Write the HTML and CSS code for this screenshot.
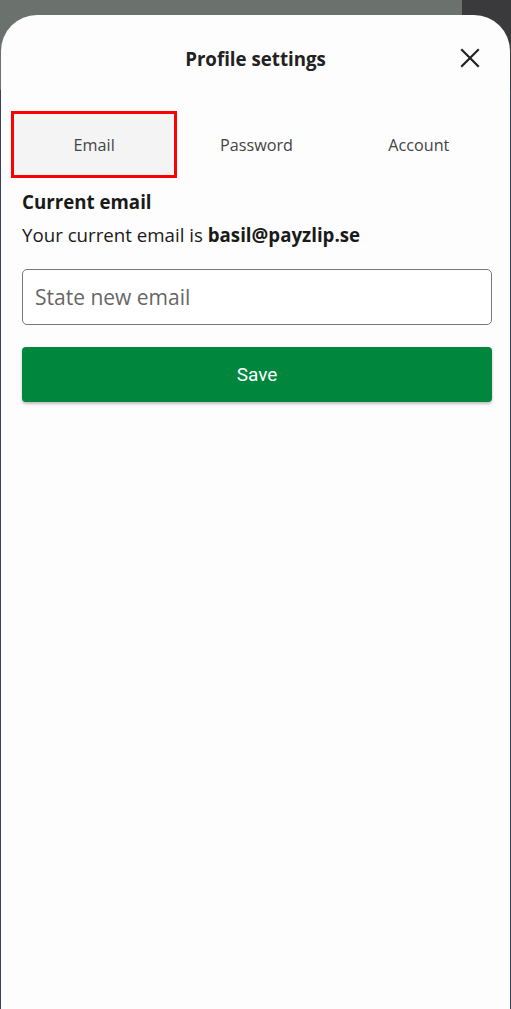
FILE: index.html
```html
<!DOCTYPE html>
<html lang="en">
<head>
<meta charset="utf-8">
<title>Profile settings</title>
<link rel="stylesheet" href="styles.css">
</head>
<body>
<div class="sheet">
  <header class="sheet-header">
    <h1 class="sheet-title">Profile settings</h1>
    <button class="close-btn" aria-label="Close">
      <svg viewBox="0 0 20 20" width="20" height="20"><path d="M2 2 L18 18 M18 2 L2 18" stroke="#222" stroke-width="2.2" stroke-linecap="square" fill="none"/></svg>
    </button>
  </header>
  <nav class="tabs">
    <div class="tab tab-active">Email</div>
    <div class="tab">Password</div>
    <div class="tab">Account</div>
  </nav>
  <section class="content">
    <h2 class="section-title">Current email</h2>
    <p class="current">Your current email is <strong>basil@payzlip.se</strong></p>
    <input class="email-input" type="text" placeholder="State new email">
    <button class="save-btn">Save</button>
  </section>
</div>
</body>
</html>
```
FILE: styles.css
```css
html, body { margin: 0; padding: 0; }
body {
  width: 511px;
  height: 1009px;
  overflow: hidden;
  background:
    linear-gradient(to right, #6b716c 0, #6b716c 462px, #3a393c 462px) top / 100% 90px no-repeat,
    #3b4256;
  font-family: "Open Sans", "Liberation Sans", sans-serif;
}
.sheet {
  margin: 15px 1px 0 1px;
  height: 994px;
  background: #fdfdfd;
  border-radius: 36px 36px 0 0;
  display: flex;
  flex-direction: column;
}
.sheet-header {
  height: 87px;
  display: flex;
  align-items: center;
  justify-content: center;
  position: relative;
}
.sheet-title {
  margin: 0;
  font-size: 18.7px;
  font-weight: 700;
  color: #222;
}
.close-btn {
  position: absolute;
  right: 30px;
  top: 33px;
  width: 20px;
  height: 20px;
  padding: 0;
  border: 0;
  background: none;
  display: flex;
}
.tabs {
  display: flex;
  margin: 11px 10px 0 12px;
}
.tab {
  flex: 1;
  height: 63px;
  display: flex;
  align-items: center;
  justify-content: center;
  font-size: 16.2px;
  color: #444;
}
.tab-active {
  background: #f4f4f4;
  outline: 3px solid #f00;
  outline-offset: -1px;
}
.content {
  padding: 14px 18px 0 21px;
  display: flex;
  flex-direction: column;
}
.section-title {
  margin: 0;
  font-size: 18.7px;
  font-weight: 700;
  color: #1a1a1a;
  line-height: 24px;
}
.current {
  margin: 9px 0 0;
  font-size: 18.7px;
  color: #1a1a1a;
  line-height: 24px;
}
.current strong { font-weight: 700; }
.email-input {
  margin-top: 22px;
  height: 56px;
  box-sizing: border-box;
  border: 1.5px solid #777;
  border-radius: 5px;
  padding: 0 12px;
  font-family: "Open Sans", sans-serif;
  font-size: 21px;
  color: #333;
  outline: none;
  background: #fff;
}
.email-input::placeholder { color: #666; }
.save-btn {
  margin-top: 22px;
  height: 55px;
  border: 0;
  border-radius: 4px;
  background: #00873d;
  color: #fff;
  font-family: Roboto, sans-serif;
  font-size: 19px;
  font-weight: 400;
  box-shadow: 0 2px 3px rgba(0,0,0,0.25);
}
```
